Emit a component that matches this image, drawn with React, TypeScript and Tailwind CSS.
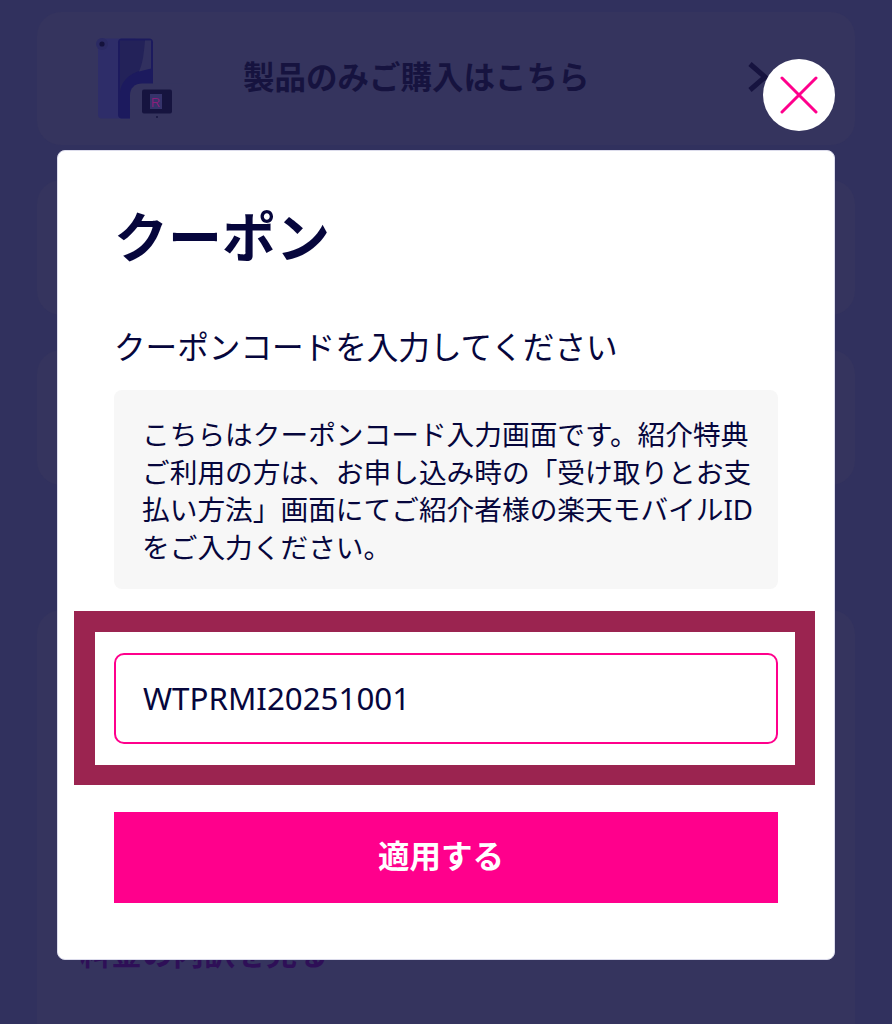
const font = { fontFamily: '"Noto Sans", "Noto Sans CJK JP", sans-serif' };

function DeviceArt() {
  return (
    <svg width="100" height="100" viewBox="0 0 100 100" className="shrink-0 blur-[0.6px]">
      <rect x="11" y="9.500" width="40" height="80" rx="4" fill="#2e2d69" />
      <circle cx="15" cy="15" r="6" fill="#2b2a63" />
      <circle cx="15" cy="15" r="2.600" fill="#14123c" />
      <rect x="31" y="9.500" width="35" height="80" rx="4" fill="#1c1a5e" />
      <path d="M33 11.500h31v28c-9 1-29 5-31 24z" fill="#232259" />
      <path d="M58 11.500h6v28l-12 3c4-8 5-20 6-31z" fill="#31305f" />
      <path d="M43 93V66c0-7 5-11.500 12-11.500h41V93z" fill="#35345e" />
      <rect x="55" y="60.500" width="30" height="24" rx="2" fill="#16143f" />
      <rect x="63" y="65" width="12" height="15" fill="#35336a" />
      <text x="69" y="78" textAnchor="middle" fontSize="13" fill="#8a1f7a" fontFamily="Liberation Sans">R</text>
      <circle cx="70" cy="88" r="1" fill="#16143f" />
    </svg>
  );
}

export default function App() {
  return (
    <div className="relative h-[1024px] w-[892px] overflow-hidden bg-[#31315e]" style={font}>
      <div className="flex flex-col gap-[35px] px-[37px] pt-[12px]">
        <div className="flex h-[133px] w-[818px] items-center rounded-[24px] bg-[#35345e] pl-[50px] pr-[85px]">
          <DeviceArt />
          <span className="ml-[56px] -mt-[3px] flex-1 text-[31.500px] font-bold text-[#16133f]">製品のみご購入はこちら</span>
          <svg width="22" height="30" viewBox="0 0 22 30" fill="none" stroke="#16133f" strokeWidth="5" className="-mt-[4px]">
            <path d="M2 2l15 13L2 28" />
          </svg>
        </div>
        <div className="h-[135px] w-[818px] rounded-[24px] bg-[#35345e]" />
        <div className="h-[135px] w-[818px] rounded-[24px] bg-[#35345e]" />
        <div className="mt-[90px] flex h-[500px] w-[818px] flex-col rounded-[24px] bg-[#35345e] pl-[43px] pt-[320px]">
          <span className="text-[31px] font-bold text-[#2e0f57]">料金の内訳を見る</span>
        </div>
      </div>

      <div className="absolute left-[57px] top-[150px] flex h-[810px] w-[778px] flex-col rounded-[8px] border border-[#dcdcec] bg-white pl-[56px] pr-[56px]">
        <h2 className="mt-[46px] text-[54px] font-bold leading-[80px] text-[#06063c]">クーポン</h2>
        <p className="mt-[48px] whitespace-nowrap text-[31.600px] leading-[44px] text-[#06063c]">クーポンコードを入力してください</p>
        <div className="mt-[21px] h-[199px] w-[664px] rounded-[8px] bg-[#f7f7f7] pl-[28px] pr-[20px] pt-[26px] text-[27.700px] leading-[37.500px] text-[#06063c]">
          こちらはクーポンコード入力画面です。紹介特典
          <br />
          ご利用の方は、お申し込み時の「受け取りとお支
          <br />
          払い方法」画面にてご紹介者様の楽天モバイルID
          <br />
          をご入力ください。
        </div>
        <div className="-ml-[40px] mt-[22px] w-[741px] border-b-[20px] border-l-[21px] border-r-[20px] border-t-[21px] border-[#9b2450] bg-white pb-[21px] pl-[19px] pr-[20px] pt-[21px]">
          <div className="flex h-[91px] w-[664px] items-center rounded-[10px] border-2 border-[#ff008c] px-[27px] text-[31.300px] text-[#06063c]">
            WTPRMI20251001
          </div>
        </div>
        <button className="mt-[27px] h-[91px] w-[664px] bg-[#ff008c] pb-[4px] pr-[10px] text-[31.500px] font-bold text-white">適用する</button>
      </div>

      <button className="absolute left-[763px] top-[59px] flex h-[72px] w-[72px] items-center justify-center rounded-full bg-white">
        <svg width="38" height="38" viewBox="0 0 38 38" fill="none" stroke="#ff008c" strokeWidth="3" strokeLinecap="round">
          <path d="M2 2l34 34M36 2L2 36" />
        </svg>
      </button>
    </div>
  );
}
